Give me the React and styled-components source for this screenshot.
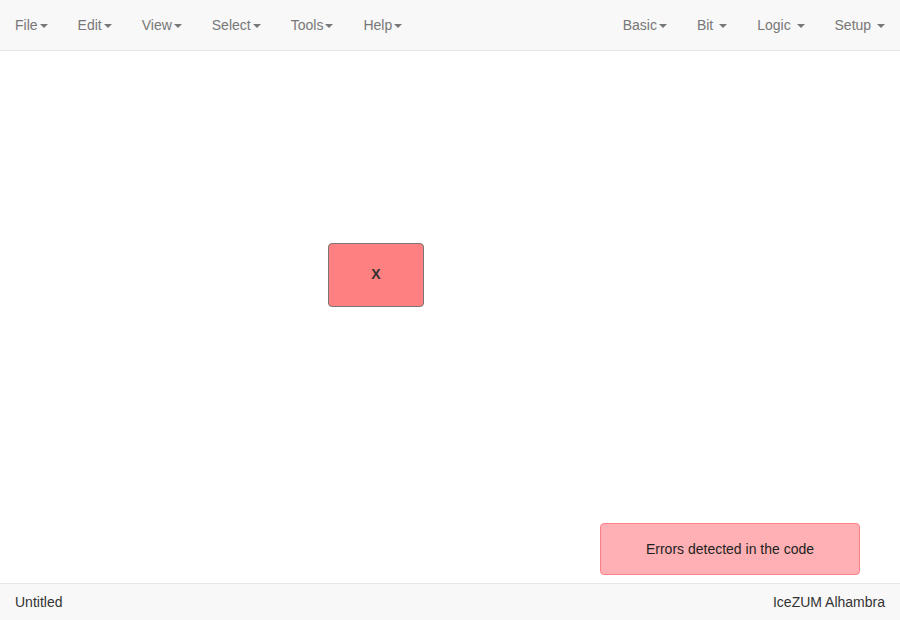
import React from "react";
import styled, { createGlobalStyle } from "styled-components";

const Global = createGlobalStyle`
  html, body { margin: 0; padding: 0; height: 100%; }
  body { font-family: "Liberation Sans", Arial, Helvetica, sans-serif; font-size: 14px; line-height: 1.42857; color: #333; background: #fff; }
  #root { height: 100%; }
  * { box-sizing: border-box; }
`;

const Page = styled.div`
  height: 620px;
  display: flex;
  flex-direction: column;
`;

const Navbar = styled.nav`
  height: 51px;
  flex: none;
  background: #f8f8f8;
  border-bottom: 1px solid #e7e7e7;
  display: flex;
  justify-content: space-between;
`;

const Menu = styled.ul`
  list-style: none;
  margin: 0;
  padding: 0;
  display: flex;
`;

const MenuLink = styled.a`
  display: block;
  padding: 15px;
  line-height: 20px;
  color: #777;
  text-decoration: none;
  cursor: pointer;
`;

const Caret = styled.span`
  display: inline-block;
  width: 0;
  height: 0;
  margin-left: 2px;
  vertical-align: middle;
  border-top: 4px solid;
  border-right: 4px solid transparent;
  border-left: 4px solid transparent;
`;

const Canvas = styled.main`
  flex: 1;
  position: relative;
  background: #fff;
`;

const Block = styled.div`
  position: absolute;
  display: flex;
  align-items: center;
  justify-content: center;
  background: #ff8080;
  border: 1px solid #777;
  border-radius: 4px;
  font-weight: bold;
  color: #333;
`;

const Alert = styled.div`
  position: absolute;
  right: 40px;
  bottom: 8px;
  width: 260px;
  height: 52px;
  display: flex;
  align-items: center;
  justify-content: center;
  padding-top: 2px;
  background: #ffb0b4;
  border: 1px solid #ff8088;
  border-radius: 4px;
  color: #222;
`;

const Footer = styled.footer`
  height: 37px;
  flex: none;
  background: #f8f8f8;
  border-top: 1px solid #e7e7e7;
  display: flex;
  align-items: center;
  justify-content: space-between;
  padding: 2px 15px 0;
  color: #333;
`;

const left = ["File", "Edit", "View", "Select", "Tools", "Help"];
const right = [["Basic", ""], ["Bit", " "], ["Logic", " "], ["Setup", " "]];

export default function App() {
  return (
    <>
      <Global />
      <Page>
        <Navbar>
          <Menu>
            {left.map((m) => (
              <li key={m}>
                <MenuLink>{m}<Caret /></MenuLink>
              </li>
            ))}
          </Menu>
          <Menu>
            {right.map(([m, sp]) => (
              <li key={m}>
                <MenuLink>{m}{sp}<Caret /></MenuLink>
              </li>
            ))}
          </Menu>
        </Navbar>
        <Canvas>
          <Block style={{ left: 328, top: 192, width: 96, height: 64 }}>X</Block>
          <Alert>Errors detected in the code</Alert>
        </Canvas>
        <Footer>
          <span>Untitled</span>
          <span>IceZUM Alhambra</span>
        </Footer>
      </Page>
    </>
  );
}
